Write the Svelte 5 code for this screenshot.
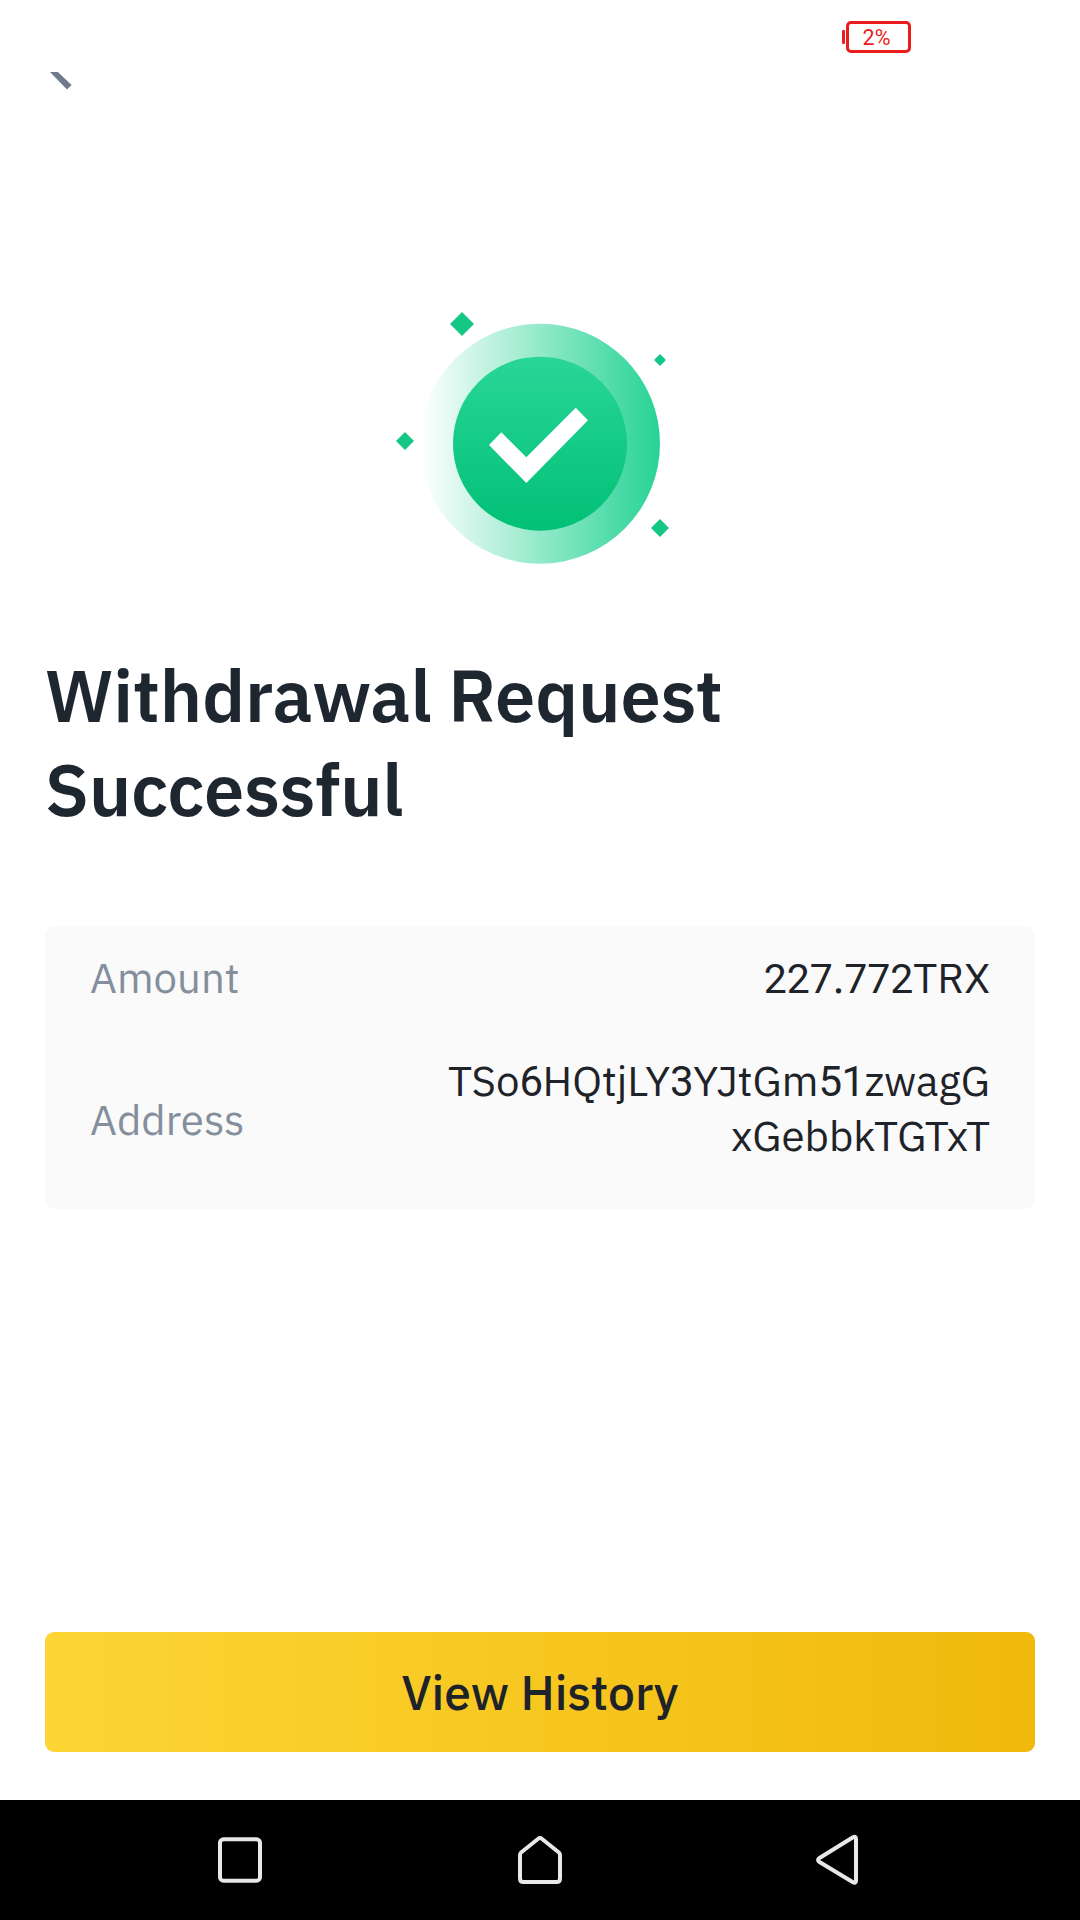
<script>
  // Numerals are set in a narrower face than the surrounding letters.
  const split = (text) => text.match(/\d+|\D+/g).map((t) => ({ t, digit: /\d/.test(t) }));

  const amount = split('227.772TRX');
  const address = ['TSo6HQtjLY3YJtGm51zwagG', 'xGebbkTGTxT'].map(split);
  const sparks = [
    { x: 72, y: 34, r: 12 },
    { x: 270, y: 70, r: 6 },
    { x: 15, y: 151, r: 9 },
    { x: 270, y: 238, r: 9 }
  ];
</script>

{#snippet mixed(parts)}{#each parts as p}{#if p.digit}<span class="digit">{p.t}</span>{:else}{p.t}{/if}{/each}{/snippet}

<div class="screen">
  <header class="status">
    <div class="battery"><span>2%</span></div>
  </header>
  <div class="back">
    <svg width="30" height="24" viewBox="0 0 30 24" aria-label="Back">
      <path d="M0 0H7.8L21.6 13L17 17.400Z" fill="#6f7a8a" />
    </svg>
  </div>

  <main>
    <svg class="hero" width="300" height="280" viewBox="0 0 300 280">
      <defs>
        <linearGradient id="ring" x1="0" x2="1" y1="0" y2="0">
          <stop offset="0" stop-color="#26d395" stop-opacity="0" />
          <stop offset="1" stop-color="#26d395" />
        </linearGradient>
        <linearGradient id="disc" x1="0" x2="0" y1="0" y2="1">
          <stop offset="0" stop-color="#29d697" />
          <stop offset="1" stop-color="#02c076" />
        </linearGradient>
      </defs>
      <circle cx="150" cy="153.7" r="120" fill="url(#ring)" />
      <circle cx="150" cy="153.7" r="87" fill="url(#disc)" />
      <path d="M99 155L111.3 142.3L136.3 167.3L185.7 117.7L198 130.3L136.3 193Z" fill="#fff" />
      {#each sparks as s}
        <path d="M{s.x} {s.y - s.r}l{s.r} {s.r}l{-s.r} {s.r}l{-s.r} {-s.r}z" fill="#14c784" />
      {/each}
    </svg>

    <h1>Withdrawal Request<br />Successful</h1>

    <dl class="card">
      <div class="row">
        <dt>Amount</dt>
        <dd class="amount">{@render mixed(amount)}</dd>
      </div>
      <div class="row address">
        <dt>Address</dt>
        <dd>
          {#each address as line}
            <div>{@render mixed(line)}</div>
          {/each}
        </dd>
      </div>
    </dl>

    <button>View History</button>
  </main>

  <nav>
    <svg viewBox="0 0 80 80"><rect x="20" y="19.3" width="40" height="41.4" rx="3.5" /></svg>
    <svg viewBox="0 0 80 80"><path d="M38.2 18.800Q40 17.200 41.800 18.800L58.600 32.200Q60 33.400 60 35V58.500Q60 62 56.500 62H23.500Q20 62 20 58.500V35Q20 33.400 21.400 32.200Z" /></svg>
    <svg viewBox="0 0 80 80"><path d="M52.600 17.500Q56 15.600 56 19V60.500Q56 64 52.600 62L19.500 42Q16.600 40 19.500 38Z" /></svg>
  </nav>
</div>

<style>
  :global(body) {
    margin: 0;
    background: #fff;
  }
  .screen {
    width: 1080px;
    height: 1920px;
    display: flex;
    flex-direction: column;
    background: #fff;
    color: #1e2329;
    font-family: 'IBM Plex Sans', Roboto, 'Noto Sans', sans-serif;
  }
  .status {
    height: 72px;
    box-sizing: border-box;
    padding: 21px 169px 0 0;
    display: flex;
    justify-content: flex-end;
    align-items: flex-start;
  }
  .battery {
    position: relative;
    box-sizing: border-box;
    width: 65px;
    height: 32px;
    padding: 1px 4px 0 0;
    border: 3px solid #ea1c1c;
    border-radius: 5px;
    display: flex;
    align-items: center;
    justify-content: center;
    font: 400 21.5px/26px Roboto, sans-serif;
    color: #ea1c1c;
  }
  .battery::before {
    content: '';
    position: absolute;
    left: -7px;
    top: 6px;
    width: 3px;
    height: 14px;
    border-radius: 1px;
    background: #ea1c1c;
  }
  .back {
    height: 218px;
    padding-left: 50px;
  }
  .back svg {
    display: block;
  }
  main {
    flex: 1;
    display: flex;
    flex-direction: column;
    padding: 0 45px 48px;
  }
  .hero {
    display: block;
    align-self: center;
  }
  h1 {
    margin: 78px 0 0;
    font-size: 72px;
    line-height: 94px;
    font-weight: 600;
    letter-spacing: -0.1px;
    color: #1e2630;
  }
  .card {
    margin: 90px 0 0;
    box-sizing: border-box;
    height: 283px;
    padding: 24px 45px 0;
    border-radius: 10px;
    background: #fafafa;
    font-size: 42px;
    line-height: 55px;
    display: flex;
    flex-direction: column;
    gap: 48px;
  }
  .row {
    display: flex;
    justify-content: space-between;
    align-items: flex-start;
  }
  .address dt {
    margin-top: 39px;
  }
  dt {
    color: #848e9c;
  }
  dd {
    margin: 0;
    text-align: right;
    white-space: nowrap;
  }
  .digit {
    font-family: Roboto, sans-serif;
    line-height: 0;
    letter-spacing: -0.5px;
  }
  .amount .digit {
    font-size: 41px;
    letter-spacing: 0;
  }
  button {
    margin-top: auto;
    height: 120px;
    padding: 0;
    border: 0;
    border-radius: 9px;
    background: linear-gradient(90deg, #fdd535, #f0b90b);
    color: #1e2329;
    font: inherit;
    font-size: 48px;
    line-height: 120px;
    font-weight: 500;
  }
  nav {
    height: 120px;
    background: #000;
    display: flex;
    justify-content: space-between;
    align-items: center;
    padding: 0 200px;
  }
  nav svg {
    width: 80px;
    height: 80px;
    fill: none;
    stroke: #e8e8e8;
    stroke-width: 4;
    stroke-linejoin: round;
  }
</style>
